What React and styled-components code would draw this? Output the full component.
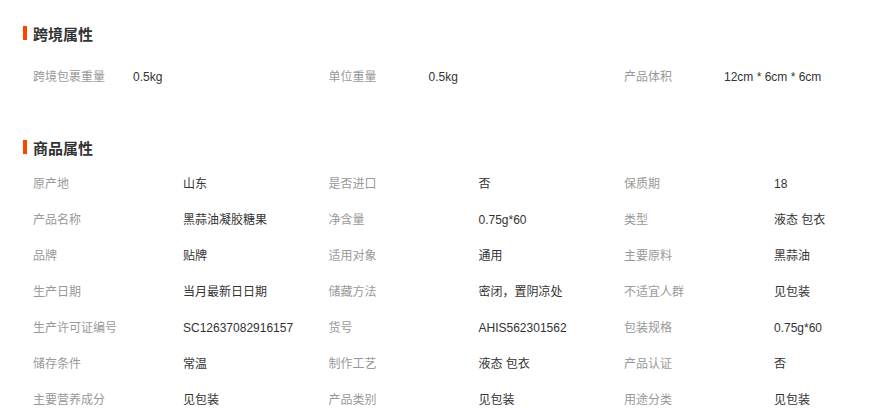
import React from 'react'
import styled, { createGlobalStyle } from 'styled-components'

const crossBorder = [
    { label: '跨境包裹重量', value: '0.5kg' },
    { label: '单位重量', value: '0.5kg' },
    { label: '产品体积', value: '12cm * 6cm * 6cm' },
]

const goods = [
    ['原产地', '山东'], ['是否进口', '否'], ['保质期', '18'],
    ['产品名称', '黑蒜油凝胶糖果'], ['净含量', '0.75g*60'], ['类型', '液态 包衣'],
    ['品牌', '贴牌'], ['适用对象', '通用'], ['主要原料', '黑蒜油'],
    ['生产日期', '当月最新日日期'], ['储藏方法', '密闭，置阴凉处'], ['不适宜人群', '见包装'],
    ['生产许可证编号', 'SC12637082916157'], ['货号', 'AHIS562301562'], ['包装规格', '0.75g*60'],
    ['储存条件', '常温'], ['制作工艺', '液态 包衣'], ['产品认证', '否'],
    ['主要营养成分', '见包装'], ['产品类别', '见包装'], ['用途分类', '见包装'],
]

function App() {
    return (
        <>
            <GlobalStyle />
            <Wrapper>
                <Title>跨境属性</Title>
                <Grid $top={16}>
                    {crossBorder.map(item => (
                        <Item key={item.label}>
                            <Label $w={100}>{item.label}</Label>
                            <Value>{item.value}</Value>
                        </Item>
                    ))}
                </Grid>

                <Title $top={42}>商品属性</Title>
                <Grid $top={9}>
                    {goods.map(([label, value]) => (
                        <Item key={label}>
                            <Label $w={150}>{label}</Label>
                            <Value>{value}</Value>
                        </Item>
                    ))}
                </Grid>
            </Wrapper>
        </>
    )
}

export default App;

const GlobalStyle = createGlobalStyle`
body {
    margin: 0;
    background: #fff;
    font-family: "Liberation Sans", "Noto Sans CJK SC", sans-serif;
}
`

const Wrapper = styled.div`
padding-top: 23px;
overflow: hidden;
`

const Title = styled.div`
display: flex;
align-items: center;
gap: 6px;
margin-top: ${p => p.$top || 0}px;
padding-left: 23px;
height: 20px;
font-size: 15px;
font-weight: 700;
color: #333;

&::before {
    content: '';
    width: 4px;
    height: 14px;
    background: #ff4400;
}
`

const Grid = styled.div`
display: grid;
grid-template-columns: 295.5px 295.5px 1fr;
margin-top: ${p => p.$top}px;
padding-left: 33px;
`

const Item = styled.div`
display: flex;
align-items: baseline;
height: 36px;
line-height: 36px;
font-size: 12px;
min-width: 0;
`

const Label = styled.span`
width: ${p => p.$w}px;
flex-shrink: 0;
color: #999;
`

const Value = styled.span`
color: #333;
white-space: nowrap;
`
